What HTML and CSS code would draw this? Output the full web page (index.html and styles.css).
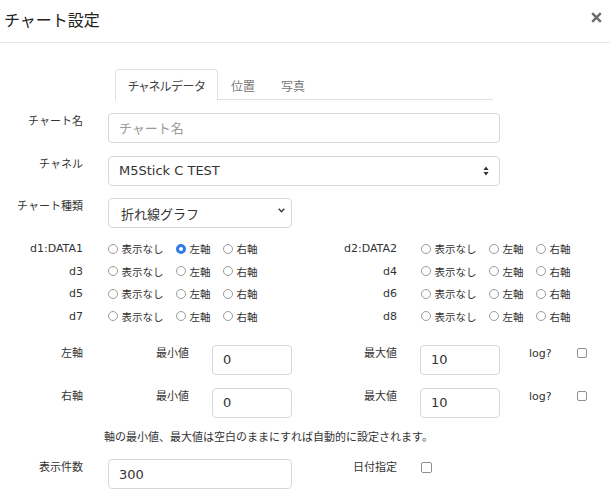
FILE: index.html
```html
<!DOCTYPE html>
<html lang="ja">
<head>
<meta charset="utf-8">
<title>チャート設定</title>
<link rel="stylesheet" href="styles.css">
</head>
<body>
<div class="modal">
  <header class="modal-header">
    <h5 class="modal-title">チャート設定</h5>
    <button class="close" type="button" aria-label="閉じる">
      <svg width="11" height="11" viewBox="0 0 11 11"><path d="M1.2 1.2 L9.8 9.8 M9.8 1.2 L1.2 9.8" stroke="#6b6b6b" stroke-width="2.4" stroke-linecap="butt"/></svg>
    </button>
  </header>
  <div class="modal-body">
    <ul class="tabs">
      <li class="tab active">チャネルデータ</li>
      <li class="tab">位置</li>
      <li class="tab">写真</li>
    </ul>

    <div class="form-row">
      <label class="lbl">チャート名</label>
      <input class="form-control" type="text" placeholder="チャート名">
    </div>
    <div class="form-row">
      <label class="lbl">チャネル</label>
      <div class="form-control select-native">
        <span>M5Stick C TEST</span>
        <svg width="6" height="10" viewBox="0 0 6 10"><path d="M3 0.5 L5.6 4 H0.4 Z M3 9.5 L5.6 6 H0.4 Z" fill="#333"/></svg>
      </div>
    </div>
    <div class="form-row">
      <label class="lbl">チャート種類</label>
      <div class="form-control select-custom">
        <span>折れ線グラフ</span>
        <svg width="7" height="5" viewBox="0 0 7 5"><path d="M0.8 0.8 L3.5 3.8 L6.2 0.8" fill="none" stroke="#343a40" stroke-width="1.4"/></svg>
      </div>
    </div>

    <div class="radio-grid">
      <span class="lbl-d">d1:DATA1</span>
      <div class="opts">
        <span class="opt"><i class="radio"></i>表示なし</span><span class="opt"><i class="radio checked"></i>左軸</span><span class="opt"><i class="radio"></i>右軸</span>
      </div>
      <span class="lbl-d">d2:DATA2</span>
      <div class="opts opts-r">
        <span class="opt"><i class="radio"></i>表示なし</span><span class="opt"><i class="radio"></i>左軸</span><span class="opt"><i class="radio"></i>右軸</span>
      </div>

      <span class="lbl-d">d3</span>
      <div class="opts">
        <span class="opt"><i class="radio"></i>表示なし</span><span class="opt"><i class="radio"></i>左軸</span><span class="opt"><i class="radio"></i>右軸</span>
      </div>
      <span class="lbl-d">d4</span>
      <div class="opts opts-r">
        <span class="opt"><i class="radio"></i>表示なし</span><span class="opt"><i class="radio"></i>左軸</span><span class="opt"><i class="radio"></i>右軸</span>
      </div>

      <span class="lbl-d">d5</span>
      <div class="opts">
        <span class="opt"><i class="radio"></i>表示なし</span><span class="opt"><i class="radio"></i>左軸</span><span class="opt"><i class="radio"></i>右軸</span>
      </div>
      <span class="lbl-d">d6</span>
      <div class="opts opts-r">
        <span class="opt"><i class="radio"></i>表示なし</span><span class="opt"><i class="radio"></i>左軸</span><span class="opt"><i class="radio"></i>右軸</span>
      </div>

      <span class="lbl-d">d7</span>
      <div class="opts">
        <span class="opt"><i class="radio"></i>表示なし</span><span class="opt"><i class="radio"></i>左軸</span><span class="opt"><i class="radio"></i>右軸</span>
      </div>
      <span class="lbl-d">d8</span>
      <div class="opts opts-r">
        <span class="opt"><i class="radio"></i>表示なし</span><span class="opt"><i class="radio"></i>左軸</span><span class="opt"><i class="radio"></i>右軸</span>
      </div>
    </div>

    <div class="axis-row first">
      <label class="lbl">左軸</label>
      <label class="lbl">最小値</label>
      <input class="form-control small" type="text" value="0">
      <label class="lbl">最大値</label>
      <input class="form-control small" type="text" value="10">
      <label class="lbl">log?</label>
      <i class="check"></i>
    </div>
    <div class="axis-row">
      <label class="lbl">右軸</label>
      <label class="lbl">最小値</label>
      <input class="form-control small" type="text" value="0">
      <label class="lbl">最大値</label>
      <input class="form-control small" type="text" value="10">
      <label class="lbl">log?</label>
      <i class="check"></i>
    </div>

    <p class="note">軸の最小値、最大値は空白のままにすれば自動的に設定されます。</p>

    <div class="axis-row last">
      <label class="lbl">表示件数</label>
      <input class="form-control count" type="text" value="300">
      <label class="lbl">日付指定</label>
      <i class="check date"></i>
    </div>
  </div>
</div>
</body>
</html>
```

FILE: styles.css
```css
html, body {
  margin: 0;
  padding: 0;
  background: #fff;
}
body {
  font-family: "DejaVu Sans", "Noto Sans CJK JP", sans-serif;
  color: #333;
  width: 610px;
  height: 500px;
  overflow: hidden;
}
.modal {
  width: 610px;
}
.modal-header {
  height: 42px;
  border-bottom: 1px solid #e6e6e6;
  display: flex;
  justify-content: space-between;
  align-items: flex-start;
  padding: 0 8px 0 4px;
  box-sizing: content-box;
}
.modal-title {
  margin: 0;
  padding-top: 9px;
  font-family: "Noto Sans CJK JP", sans-serif;
  font-weight: 400;
  font-size: 16px;
  line-height: 20px;
  color: #222;
}
.close {
  margin-top: 12px;
  padding: 0;
  border: 0;
  background: none;
  width: 11px;
  height: 11px;
  display: block;
}
.close svg {
  display: block;
}

.tabs {
  list-style: none;
  margin: 26px 0 0 115px;
  padding: 0;
  width: 378px;
  height: 30px;
  display: flex;
  border-bottom: 1px solid #dee2e6;
}
.tab {
  height: 30px;
  padding: 0 12px;
  border: 1px solid transparent;
  border-top-left-radius: 4px;
  border-top-right-radius: 4px;
  font-family: "Noto Sans CJK JP", sans-serif;
  font-size: 12px;
  line-height: 31px;
  font-feature-settings: "palt";
  color: #777;
}
.tab.active {
  border-color: #dee2e6 #dee2e6 #fff;
  color: #444;
  background: #fff;
}

.form-row {
  display: grid;
  grid-template-columns: 83px 392px;
  column-gap: 25px;
  margin-top: 12.5px;
}
.form-row:first-of-type {
  margin-top: 13px;
}
.lbl {
  font-size: 11px;
  line-height: 17px;
  text-align: right;
  color: #333;
  white-space: nowrap;
}
.form-control {
  box-sizing: border-box;
  height: 30px;
  border: 1px solid #d6d9dc;
  border-radius: 4px;
  padding: 0 10px;
  font-family: "DejaVu Sans", "Noto Sans CJK JP", sans-serif;
  font-size: 13px;
  color: #333;
  background: #fff;
  outline: none;
  width: 100%;
  margin: 0;
}
.form-control::placeholder {
  color: #9a9a9a;
}
.select-native,
.select-custom {
  display: flex;
  align-items: center;
  justify-content: space-between;
}
.select-native {
  padding: 0 10px 0 10px;
}
.select-custom {
  width: 184px;
  padding: 0 6px 0 12px;
}
.select-custom svg {
  margin-top: -5px;
}

.radio-grid {
  display: grid;
  grid-template-columns: 83px 230px 84px 1fr;
  grid-auto-rows: 22.5px;
  align-items: center;
  margin-top: 9.5px;
}
.lbl-d {
  font-size: 11px;
  text-align: right;
  color: #333;
}
.opts {
  padding-left: 25px;
  display: flex;
  align-items: center;
  font-size: 10.5px;
  color: #333;
  white-space: nowrap;
}
.opts-r {
  padding-left: 24px;
}
.opt {
  display: inline-flex;
  align-items: center;
  margin-right: 12.5px;
}
.radio {
  box-sizing: border-box;
  width: 10px;
  height: 10px;
  border: 1px solid #9c9c9c;
  border-radius: 50%;
  margin-right: 3.5px;
  background: #fff;
  display: inline-block;
}
.radio.checked {
  border: 3px solid #2f7ae5;
  background: #fff;
}

.axis-row {
  display: grid;
  grid-template-columns: 83px 106px 103px 105px 103px 51.5px 35.5px;
  margin-top: 13px;
}
.axis-row.first {
  margin-top: 17px;
}
.axis-row .small {
  justify-self: end;
  width: 80px;
}
.axis-row .check {
  justify-self: end;
  margin-top: 3px;
}
.check {
  box-sizing: border-box;
  display: block;
  width: 10.5px;
  height: 10.5px;
  border: 1px solid #8f8f8f;
  border-radius: 2px;
  background: #fff;
}
.axis-row.last {
  margin-top: 13.5px;
}
.axis-row .count {
  grid-column: 2 / span 2;
  justify-self: end;
  width: 184px;
}
.axis-row .check.date {
  justify-self: start;
  margin-left: 24px;
  grid-column: 5;
}
.note {
  margin: 11px 0 0 104px;
  font-size: 11px;
  line-height: 17px;
  color: #333;
}
```
